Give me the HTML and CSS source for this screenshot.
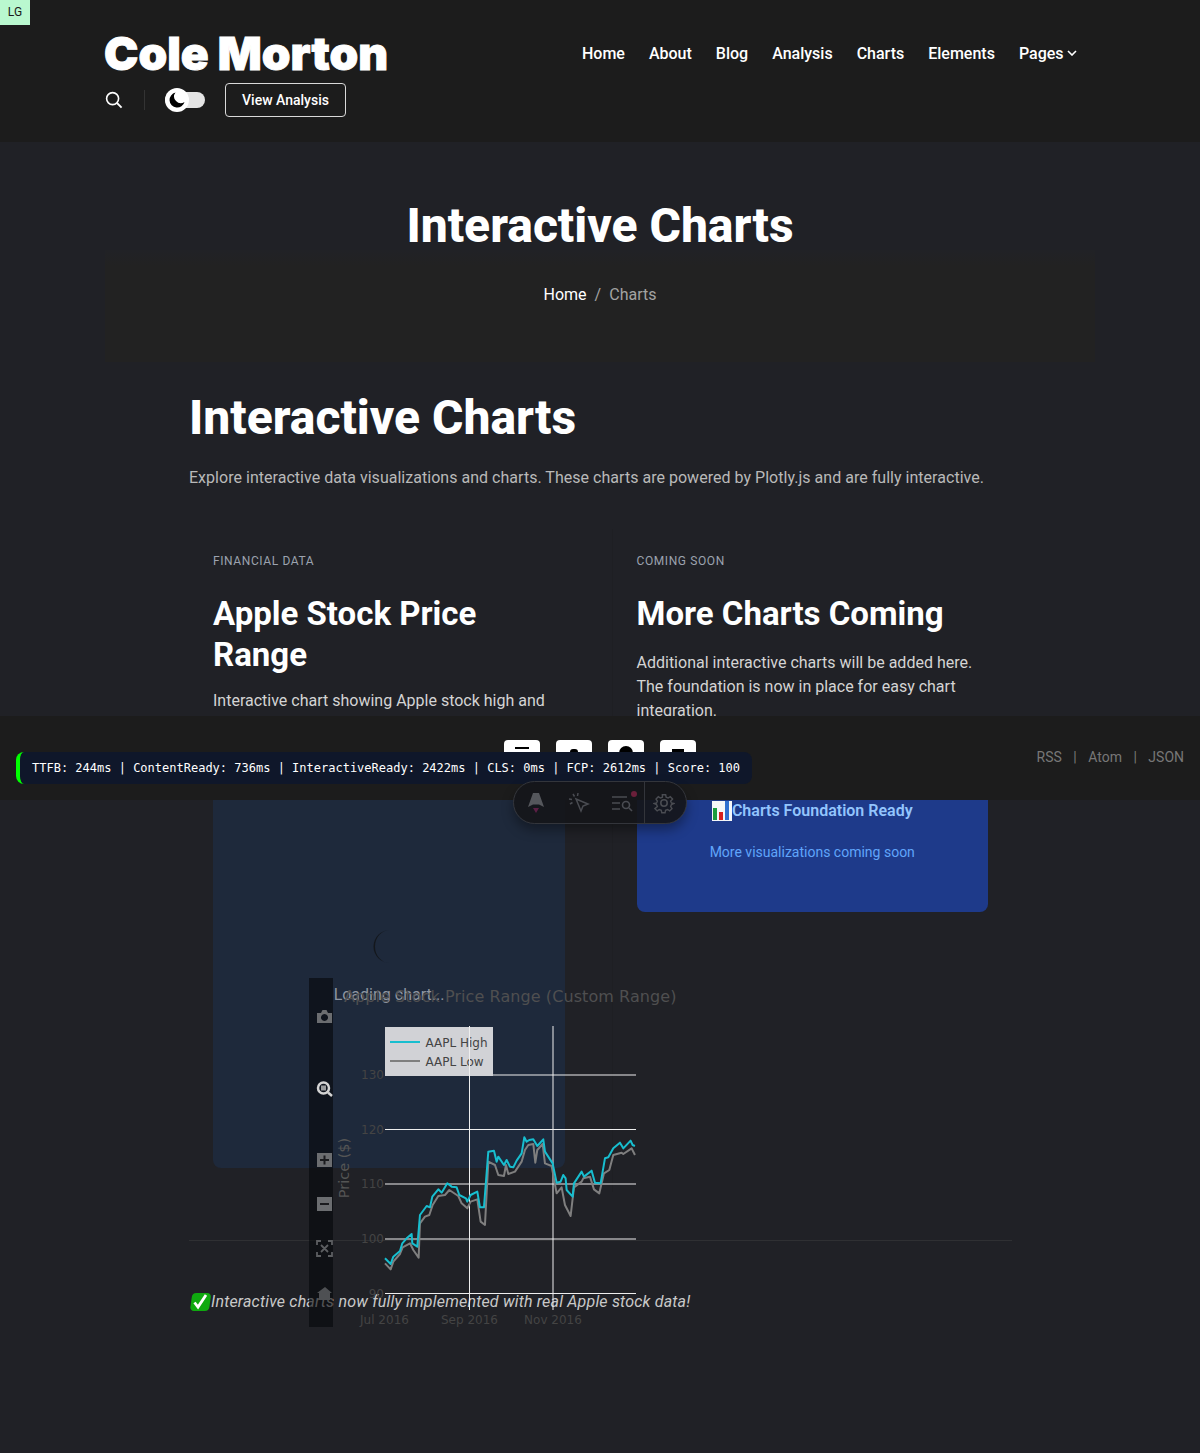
FILE: index.html
```html
<!DOCTYPE html>
<html lang="en">
<head>
    <meta charset="UTF-8">
    <meta name="viewport" content="width=device-width, initial-scale=1.0">
    <title>Interactive Charts</title>
    <link rel="stylesheet" href="styles.css">
</head>
<body>
    <div class="breakpoint-badge">LG</div>

    <header class="site-header">
        <div class="header-top">
            <a class="logo">Cole Morton</a>
            <nav class="main-nav">
                <a>Home</a>
                <a>About</a>
                <a>Blog</a>
                <a>Analysis</a>
                <a>Charts</a>
                <a>Elements</a>
                <a class="has-caret">Pages
                    <svg width="10" height="6" viewBox="0 0 10 6"><path d="M1 1l4 4 4-4" fill="none" stroke="#fff" stroke-width="1.6"/></svg>
                </a>
            </nav>
        </div>
        <div class="header-actions">
            <svg class="search-icon" width="18" height="18" viewBox="0 0 18 18"><circle cx="7.6" cy="7.6" r="6" fill="none" stroke="#fff" stroke-width="1.6"/><path d="M12 12l4.6 4.6" stroke="#fff" stroke-width="1.8"/></svg>
            <span class="action-divider"></span>
            <div class="theme-toggle">
                <span class="toggle-knob">
                    <svg width="16" height="16" viewBox="0 0 16 16"><path d="M6.5 .6a7.6 7.6 0 1 0 9 9.4 6.6 6.6 0 0 1-9-9.400z" fill="#000"/></svg>
                </span>
            </div>
            <a class="outline-btn">View Analysis</a>
        </div>
    </header>

    <section class="hero">
        <h1>Interactive Charts</h1>
        <div class="hero-band">
            <div class="breadcrumb"><a>Home</a><span>/</span><span>Charts</span></div>
        </div>
    </section>

    <main class="content">
        <h1>Interactive Charts</h1>
        <p class="lead">Explore interactive data visualizations and charts. These charts are powered by Plotly.js and are fully interactive.</p>

        <div class="card-grid">
            <article class="card">
                <div class="card-label">FINANCIAL DATA</div>
                <h2>Apple Stock Price Range</h2>
                <p>Interactive chart showing Apple stock high and low prices over a custom date range.</p>
                <div class="chart-box">
                    <svg class="spinner" width="33" height="33" viewBox="0 0 33 33"><path d="M17 0A16.500 16.500 0 0 0 17 33 15 16.500 0 0 1 17 0z" fill="#14171c"/></svg>
                    <div class="chart-loading">Loading chart...</div>
                </div>
            </article>
            <article class="card card-right">
                <div class="card-label">COMING SOON</div>
                <h2>More Charts Coming</h2>
                <p>Additional interactive charts will be added here. The foundation is now in place for easy chart integration.</p>
                <div class="soon-box">
                    <div class="soon-title">
                        <svg width="20" height="20" viewBox="0 0 20 20"><rect width="20" height="20" fill="#f4f6f8"/><rect x="1" y="7" width="4" height="12" fill="#1a9c3e"/><rect x="7" y="11" width="4" height="8" fill="#d61f1f"/><rect x="13" y="0" width="4" height="19" fill="#2f6fd0"/></svg>
                        <span>Charts Foundation Ready</span>
                    </div>
                    <div class="soon-sub">More visualizations coming soon</div>
                </div>
            </article>
        </div>

        <hr class="rule">
        <p class="note">
            <svg width="22" height="20" viewBox="0 0 22 20"><rect x="1" y="1" width="19" height="18" rx="4" fill="#0fa90f" transform="skewX(-8) translate(2.500 0)"/><path d="M5.500 10.500l3.500 4.500 8-12" fill="none" stroke="#fff" stroke-width="2.800"/></svg><em>Interactive charts now fully implemented with real Apple stock data!</em>
        </p>
    </main>

    <!-- Plotly chart rendered out of the box, lies over the page -->
    <div class="plot">
        <div class="modebar">
            <svg viewBox="0 0 25 349" width="25" height="349">
                <path d="M8 35h4l1.500-3h4L19 35h4v10H8z M15.500 36a3.500 3.500 0 1 0 .01 0z" fill="#6b6d70" fill-rule="evenodd"/>
                <circle cx="14.500" cy="110" r="5.500" fill="none" stroke="#d4d4d4" stroke-width="2.500"/>
                <rect x="12" y="107.500" width="5" height="5" fill="#d4d4d4" opacity=".7"/>
                <path d="M19 114.500l4 3.500" stroke="#d4d4d4" stroke-width="2.500"/>
                <rect x="8" y="175" width="15" height="14" fill="#6b6d70"/>
                <path d="M11 182h9M15.500 177.500v9" stroke="#1a1b1e" stroke-width="2"/>
                <rect x="8" y="219" width="15" height="14" fill="#6b6d70"/>
                <path d="M11 226h9" stroke="#1a1b1e" stroke-width="2"/>
                <path d="M8 267v-4h4M19 263h4v4M23 274v4h-4M12 278H8v-4M12 267l7 7M19 267l-7 7" fill="none" stroke="#5c5e61" stroke-width="1.800"/>
                <path d="M16 309l7 6h-2v7h-11v-7h-2z" fill="#4e5053"/>
            </svg>
        </div>
        <svg class="plot-svg" width="400" height="349" viewBox="309 978 400 349">
            <g class="legend">
                <rect x="385" y="1027" width="108" height="49"/>
                <path d="M390 1042h30" stroke="#17becf" stroke-width="2"/>
                <path d="M390 1061h30" stroke="#7f7f7f" stroke-width="2"/>
                <text x="425.500" y="1047">AAPL High</text>
                <text x="425.500" y="1066">AAPL Low</text>
            </g>
            <path class="grid" d="M493 1075H636M385 1129.500H636M385 1184H636M385 1239H636M385 1293.500H636M469.500 1026V1310M553 1026V1310"/>
            <g transform="translate(180 1130) scale(.3333)" fill="none" stroke-width="6" stroke-linejoin="round">
                <polyline stroke="#7f7f7f" points="615,400 632,418 640,395 660,372 668,352 690,340 700,360 716,383 720,280 735,260 748,255 758,225 775,198 795,195 808,180 835,198 845,220 862,235 872,215 892,208 902,275 915,285 925,95 945,105 955,135 972,138 978,105 985,132 1005,125 1025,95 1035,60 1045,45 1060,42 1066,98 1072,60 1088,42 1095,100 1115,108 1130,190 1145,172 1155,225 1172,258 1182,172 1205,155 1210,145 1230,140 1242,178 1258,190 1272,130 1288,120 1300,75 1325,68 1330,72 1355,55 1365,75"/>
                <polyline stroke="#17becf" points="615,385 632,402 640,380 660,363 667,340 680,325 695,312 697,340 712,350 720,255 740,228 750,232 757,200 775,178 785,188 802,160 815,170 830,172 838,195 858,205 862,215 872,195 892,185 900,232 912,232 925,65 942,62 950,95 955,80 972,105 980,90 990,110 1000,112 1010,92 1025,70 1033,22 1040,35 1048,30 1060,28 1072,48 1090,28 1095,65 1118,100 1130,158 1142,155 1150,135 1157,145 1160,180 1178,200 1182,160 1205,125 1212,140 1235,122 1245,158 1262,160 1275,85 1285,82 1300,55 1320,38 1330,55 1352,32 1358,45 1365,48"/>
            </g>
            <text class="plot-title" x="344" y="1002">Apple Stock Price Range (Custom Range)</text>
            <g class="tick" text-anchor="end">
                <text x="384" y="1079">130</text>
                <text x="384" y="1134">120</text>
                <text x="384" y="1188">110</text>
                <text x="384" y="1243">100</text>
                <text x="384" y="1298">90</text>
            </g>
            <g class="tick" text-anchor="middle">
                <text x="384.500" y="1324">Jul 2016</text>
                <text x="469.500" y="1324">Sep 2016</text>
                <text x="553" y="1324">Nov 2016</text>
            </g>
            <text class="axis-title" transform="translate(349 1168) rotate(-90)" text-anchor="middle">Price ($)</text>
        </svg>
    </div>

    <footer class="sticky-footer">
        <div class="socials">
            <span class="social"><i class="bar"></i></span>
            <span class="social"><i class="bump"></i></span>
            <span class="social"><i class="dome"></i></span>
            <span class="social"><i class="block"></i></span>
        </div>
        <div class="feeds"><a>RSS</a><span>|</span><a>Atom</a><span>|</span><a>JSON</a></div>
    </footer>

    <div class="perf-bar">TTFB: 244ms | ContentReady: 736ms | InteractiveReady: 2422ms | CLS: 0ms | FCP: 2612ms | Score: 100</div>

    <div class="dev-toolbar">
        <span class="dev-btn">
            <svg width="20" height="24" viewBox="0 0 20 24"><path d="M7 2h6l5 14-5-2.500H7L2 16z" fill="#55575c"/><path d="M7 17h6l-3 5z" fill="#5c1f45"/></svg>
        </span>
        <span class="dev-btn">
            <svg width="22" height="22" viewBox="0 0 22 22" fill="none" stroke="#4a4c52" stroke-width="1.500"><path d="M8 7l12 5-5 2-2 5z"/><path d="M5 2l1.500 2.500M10 1l-.5 3M1 7l3 .5M2 12l2.500-1.500"/></svg>
        </span>
        <span class="dev-btn">
            <svg width="24" height="20" viewBox="0 0 24 20" fill="none" stroke="#4a4c52" stroke-width="1.600"><path d="M2 4h15M2 10h8M2 16h8"/><circle cx="16" cy="12" r="3.500"/><path d="M19 15l3 3"/></svg>
            <i class="dev-dot"></i>
        </span>
        <span class="dev-sep"></span>
        <span class="dev-btn dev-gear">
            <svg width="22" height="22" viewBox="0 0 24 24" fill="none" stroke="#4a4c52" stroke-width="1.700"><circle cx="12" cy="12" r="3.500"/><path d="M10 2h4l.6 3 2.400 1 2.600-1.700 2.800 2.900L20 9.800l1 2.200 3 .6v0l-3 1.400-1 2.200 1.700 2.600-2.800 2.800-2.600-1.700-2.400 1-.6 3h-4l-.6-3-2.400-1-2.600 1.700-2.800-2.800L4 16.200 3 14l-3-1.400v0l3-.6 1-2.200-1.700-2.600 2.800-2.900L7.700 6l2.400-1z" transform="translate(1.200 1.200) scale(.9)"/></svg>
        </span>
    </div>
</body>
</html>
```

FILE: styles.css
```css
* {
    box-sizing: border-box;
}

html, body {
    margin: 0;
    padding: 0;
}

body {
    position: relative;
    height: 1453px;
    overflow: hidden;
    background-color: #202126;
    color: #ffffff;
    font-family: Roboto, "Liberation Sans", sans-serif;
    font-size: 16px;
}

h1, h2, p {
    margin: 0;
}

.breakpoint-badge {
    position: absolute;
    top: 0;
    left: 0;
    width: 30px;
    height: 25px;
    background-color: #b9f8cf;
    color: #1b1b1b;
    font-size: 12px;
    line-height: 25px;
    text-align: center;
}

/* header */
.site-header {
    height: 142px;
    padding: 24px 123px 0 104px;
    background-color: #1c1c1c;
}

.header-top {
    display: flex;
    justify-content: space-between;
    align-items: center;
    height: 59px;
}

.logo {
    font-family: Inter, sans-serif;
    font-size: 46px;
    font-weight: 900;
    -webkit-text-stroke: 1px #ffffff;
    line-height: 57px;
}

.main-nav {
    display: flex;
    gap: 24px;
    font-weight: 500;
    margin-top: -1px;
}

.has-caret {
    display: flex;
    align-items: center;
    gap: 3.500px;
}

.header-actions {
    display: flex;
    align-items: center;
    height: 34px;
    margin-top: 0;
}

.search-icon {
    margin-left: 1px;
}

.action-divider {
    width: 1px;
    height: 20px;
    margin: 0 20px 0 21px;
    background-color: #333333;
}

.theme-toggle {
    display: flex;
    align-items: center;
    width: 40px;
    height: 16px;
    margin-right: 20px;
    border-radius: 8px;
    background-color: #e5e5e5;
}

.toggle-knob {
    display: flex;
    align-items: center;
    justify-content: center;
    width: 24px;
    height: 24px;
    border-radius: 50%;
    background-color: #ffffff;
}

.outline-btn {
    display: block;
    width: 121px;
    height: 34px;
    border: 1px solid #d9d9d9;
    border-radius: 4px;
    font-size: 14px;
    font-weight: 500;
    line-height: 32px;
    text-align: center;
}

/* hero */
.hero {
    padding-top: 55px;
    text-align: center;
}

.hero h1, .content h1 {
    font-size: 48px;
    font-weight: 800;
    line-height: 58px;
}

.hero-band {
    width: 990px;
    height: 112px;
    margin: -5px auto 0;
    padding-top: 33px;
    background: linear-gradient(#212226, #222222 16px);
}

.breadcrumb {
    display: flex;
    justify-content: center;
    gap: 8px;
    line-height: 24px;
    color: #a3a3a3;
}

.breadcrumb a {
    color: #ffffff;
}

/* content */
.content {
    width: 823px;
    margin: 0 0 0 189px;
    padding-top: 27px;
}

.lead {
    margin-top: 19px;
    color: #b9b9b9;
    letter-spacing: .026px;
    line-height: 24px;
}

.card-grid {
    display: grid;
    grid-template-columns: 400px 400px;
    gap: 23px;
    margin-top: 39px;
}

.card {
    padding: 24px;
}

.card-right {
    border-left: 1px solid #1e1f23;
    padding-left: 23.500px;
}

.card-label {
    color: #9ca3af;
    font-size: 12px;
    letter-spacing: .6px;
    line-height: 16px;
}

.card h2 {
    margin-top: 25px;
    font-size: 33px;
    font-weight: 700;
    line-height: 40.500px;
}

.card p {
    margin-top: 14px;
    color: #d4d4d4;
    line-height: 24px;
}

.card-right p {
    margin-top: 16.500px;
}

.chart-box {
    display: flex;
    flex-direction: column;
    align-items: center;
    justify-content: center;
    height: 400px;
    margin-top: 31px;
    border-radius: 8px;
    background-color: #1e293b;
}

.spinner {
    margin-bottom: 20px;
}

.chart-loading {
    color: #8f96a1;
    line-height: 24px;
}

.soon-box {
    height: 173px;
    margin-top: 16px;
    padding-top: 60px;
    border-radius: 8px;
    background-color: #1e3a8a;
    text-align: center;
}

.soon-title {
    display: flex;
    align-items: center;
    justify-content: center;
    color: #93c5fd;
    font-weight: 600;
    line-height: 24px;
}

.soon-sub {
    margin-top: 19px;
    color: #60a5fa;
    font-size: 14px;
    line-height: 20px;
}

.rule {
    margin: 48px 0 49px;
    border: 0;
    border-top: 1px solid #2f3033;
}

.note {
    display: flex;
    align-items: center;
    color: #c9c9c9;
    letter-spacing: .19px;
    line-height: 24px;
}

/* plotly output */
.plot {
    position: absolute;
    top: 978px;
    left: 309px;
    width: 400px;
    height: 349px;
}

.plot-svg {
    position: absolute;
    top: 0;
    left: 0;
    font-family: "DejaVu Sans", sans-serif;
}

.modebar {
    position: absolute;
    top: 0;
    left: 0;
    width: 24px;
    height: 349px;
    background-color: rgba(5, 7, 10, .6);
}

.modebar svg {
    display: block;
    overflow: visible;
}

.grid {
    fill: none;
    stroke: #eeeeee;
    stroke-width: 1;
}

.plot-title {
    fill: #4f4f50;
    font-size: 16px;
    letter-spacing: .08px;
}

.tick {
    fill: #444444;
    font-size: 12px;
}

.axis-title {
    fill: #555555;
    font-size: 14.500px;
}

.legend rect {
    fill: #d1d2d6;
}

.legend text {
    fill: #444444;
    font-size: 12px;
}

/* sticky footer */
.sticky-footer {
    position: absolute;
    top: 716px;
    left: 0;
    display: flex;
    justify-content: flex-end;
    width: 100%;
    height: 84px;
    padding: 31px 16px 0 0;
    background-color: #1c1c1c;
    color: #777777;
    font-size: 14px;
}

.socials {
    position: absolute;
    top: 24px;
    left: 504px;
    display: flex;
    gap: 16px;
}

.social {
    display: flex;
    justify-content: center;
    width: 36px;
    height: 36px;
    border-radius: 4px;
    background-color: #ffffff;
}

.social i {
    display: block;
    background-color: #000000;
}

.social .bar {
    width: 14px;
    height: 2px;
    margin-top: 7px;
}

.social .bump {
    width: 8px;
    height: 6px;
    margin-top: 9px;
    border-radius: 3px 3px 0 0;
}

.social .dome {
    width: 14px;
    height: 14px;
    margin-top: 6px;
    border-radius: 50%;
}

.social .block {
    width: 12px;
    height: 12px;
    margin-top: 9px;
}

.feeds {
    display: flex;
    gap: 11.500px;
    line-height: 20px;
}

.perf-bar {
    position: absolute;
    top: 752px;
    left: 16px;
    width: 736px;
    height: 32px;
    padding-left: 12px;
    border-left: 4px solid #00ff00;
    border-radius: 8px;
    background-color: #0f172a;
    font-family: "DejaVu Sans Mono", monospace;
    font-size: 12px;
    line-height: 32px;
    white-space: nowrap;
}

.dev-toolbar {
    position: absolute;
    top: 781px;
    left: 513px;
    display: flex;
    align-items: center;
    width: 174px;
    height: 43px;
    border: 1px solid #33353b;
    border-radius: 22px;
    background-color: rgba(20, 21, 26, .93);
    box-shadow: 0 6px 12px rgba(0, 0, 0, .35);
}

.dev-btn {
    position: relative;
    display: flex;
    align-items: center;
    justify-content: center;
    width: 43.300px;
    height: 100%;
}

.dev-gear {
    width: 38px;
}

.dev-sep {
    width: 1px;
    height: 100%;
    background-color: #33353b;
}

.dev-dot {
    position: absolute;
    top: 9px;
    right: 7px;
    width: 6px;
    height: 6px;
    border-radius: 50%;
    background-color: #6b1f3a;
}
```
